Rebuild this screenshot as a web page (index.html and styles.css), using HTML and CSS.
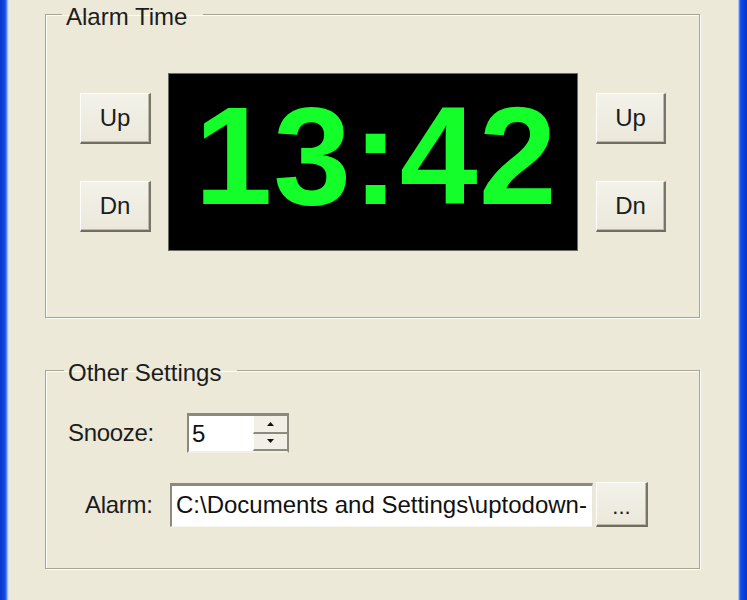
FILE: index.html
```html
<!DOCTYPE html>
<html>
<head>
<meta charset="utf-8">
<title>Alarm</title>
<link rel="stylesheet" href="styles.css">
</head>
<body>
<div class="window">
  <div class="frame frame-left"></div>
  <div class="client">
    <fieldset class="group group-time">
      <legend>Alarm Time</legend>
      <div class="time-row">
        <div class="btn-col">
          <button class="btn btn-step">Up</button>
          <button class="btn btn-step">Dn</button>
        </div>
        <div class="clock">13:42</div>
        <div class="btn-col">
          <button class="btn btn-step btn-narrow">Up</button>
          <button class="btn btn-step btn-narrow">Dn</button>
        </div>
      </div>
    </fieldset>
    <fieldset class="group group-settings">
      <legend>Other Settings</legend>
      <div class="row row-snooze">
        <label class="lbl lbl-snooze">Snooze:</label>
        <div class="spin">
          <span class="spin-value">5</span>
          <div class="spin-btns">
            <span class="spin-btn"><svg width="7" height="4" viewBox="0 0 7 4"><path d="M3.5 0 L7 4 L0 4 Z" fill="#111"/></svg></span>
            <span class="spin-btn"><svg width="7" height="4" viewBox="0 0 7 4"><path d="M0 0 L7 0 L3.5 4 Z" fill="#111"/></svg></span>
          </div>
        </div>
      </div>
      <div class="row row-alarm">
        <label class="lbl lbl-alarm">Alarm:</label>
        <div class="path">C:\Documents and Settings\uptodown-</div>
        <button class="btn btn-browse">...</button>
      </div>
    </fieldset>
  </div>
  <div class="frame frame-right"></div>
</div>
</body>
</html>
```

FILE: styles.css
```css
* { box-sizing: border-box; }

html, body {
  margin: 0;
  padding: 0;
  background: #ece9d8;
}

body {
  font-family: "Liberation Sans", Arial, sans-serif;
  font-size: 24px;
  color: #1c1c1c;
}

.window {
  display: flex;
  width: 747px;
  height: 600px;
  overflow: hidden;
}

.frame {
  flex: none;
  height: 100%;
}

.frame-left {
  width: 9px;
  background: linear-gradient(to right, #0a36c8 0, #0d46e4 4px, #2a62f0 6px, #7f9ff0 7px, #c9d6f5 8px, #e4e6ee 9px);
}

.frame-right {
  width: 10px;
  background: linear-gradient(to right, #d9dbe6 0, #8aa6ee 1px, #1b55ec 2px, #0a44e0 5px, #0632c0 10px);
}

.client {
  flex: 1;
  padding: 0 38px 0 36px;
}

.group {
  margin: 0;
  padding: 0;
  border: 1px solid #a7a493;
  box-shadow: inset 1px 1px 0 #fbfbf7, 1px 1px 0 #fbfbf7;
  min-width: 0;
}

.group legend {
  padding: 5px 16px 0 4px;
  line-height: 24px;
  color: #1c1c1c;
}

.group-time {
  width: 655px;
  padding: 44px 33px 66px 34px;
}

.group-time legend {
  margin-left: -18px;
}

.time-row {
  display: flex;
  align-items: center;
}

.btn-col {
  display: flex;
  flex-direction: column;
  gap: 37px;
}

.btn {
  font: inherit;
  color: #1c1c1c;
  padding: 0;
  margin: 0;
  background: linear-gradient(#f3f2ea, #ebe8da);
  border-style: solid;
  border-width: 1px 2px 2px 1px;
  border-color: #fdfdfb #77756a #6f6d62 #fdfdfb;
  box-shadow: inset -1px -1px 0 #bdbaa8;
}

.btn-step {
  width: 71px;
  height: 51px;
}

.btn-narrow {
  width: 70px;
}

.clock {
  width: 410px;
  height: 178px;
  margin: 0 18px 0 17px;
  background: #000;
  border: 1px solid #6a6a60;
  display: flex;
  align-items: center;
  justify-content: center;
  padding: 0 0 12px 6px;
  font-family: "Liberation Sans", Arial, sans-serif;
  font-weight: bold;
  font-size: 140px;
  line-height: 140px;
  letter-spacing: 1px;
  color: #14ff2a;
}

.group-settings {
  width: 655px;
  margin-top: 38px;
  padding: 28px 20px 41px 22px;
}

.group-settings legend {
  margin-left: -4px;
}

.row {
  display: flex;
  align-items: center;
}

.row-snooze {
  height: 40px;
}

.row-alarm {
  height: 45px;
  margin-top: 29px;
}

.lbl {
  flex: none;
  letter-spacing: -0.3px;
}

.lbl-snooze {
  width: 119px;
}

.lbl-alarm {
  width: 102px;
  padding-left: 17px;
}

.spin {
  display: flex;
  width: 102px;
  height: 40px;
  background: #fff;
  border-style: solid;
  border-width: 3px 2px 2px 2px;
  border-color: #8c8a7c #8c8a7c #f1efe6 #8c8a7c;
}

.spin-value {
  flex: 1;
  padding-left: 3px;
  line-height: 35px;
  color: #111;
}

.spin-btns {
  width: 34px;
  display: flex;
  flex-direction: column;
  background: #ece9d8;
}

.spin-btn {
  flex: 1;
  display: flex;
  align-items: center;
  justify-content: center;
  background: #f1efe6;
  border-bottom: 2px solid #8c8a7c;
  border-left: 1px solid #fff;
}

.path {
  width: 423px;
  height: 44px;
  background: #fff;
  border-style: solid;
  border-width: 3px 1px 1px 2px;
  border-color: #8c8a7c #e9e7dc #f6f5ef #8c8a7c;
  padding-left: 4px;
  line-height: 38px;
  white-space: nowrap;
  overflow: hidden;
  color: #111;
}

.btn-browse {
  width: 52px;
  height: 45px;
  margin-left: 3px;
  line-height: 30px;
  padding-top: 6px;
  font-size: 22px;
}
```
